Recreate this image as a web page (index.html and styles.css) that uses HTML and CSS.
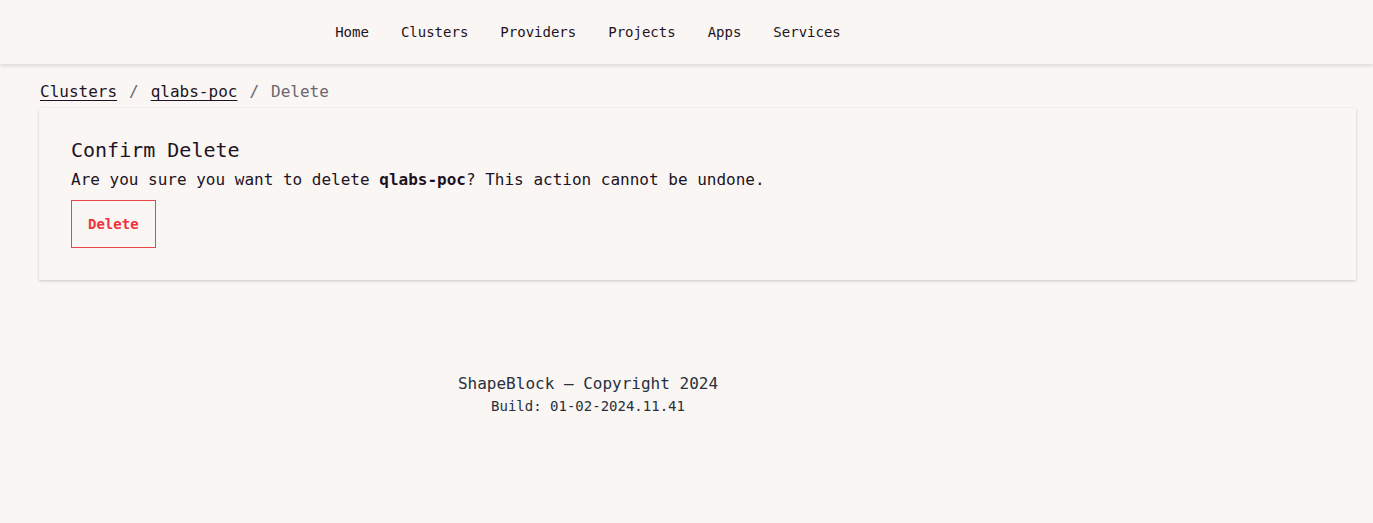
FILE: index.html
```html
<!DOCTYPE html>
<html lang="en">
<head>
<meta charset="utf-8">
<title>Confirm Delete</title>
<link rel="stylesheet" href="styles.css">
</head>
<body>
<header class="topbar">
  <nav class="nav">
    <a href="#" class="nav-link">Home</a>
    <a href="#" class="nav-link">Clusters</a>
    <a href="#" class="nav-link">Providers</a>
    <a href="#" class="nav-link">Projects</a>
    <a href="#" class="nav-link">Apps</a>
    <a href="#" class="nav-link">Services</a>
  </nav>
</header>
<main class="main">
  <div class="breadcrumb">
    <a href="#" class="crumb-link">Clusters</a>
    <span class="crumb-sep">/</span>
    <a href="#" class="crumb-link">qlabs-poc</a>
    <span class="crumb-sep">/</span>
    <span class="crumb-current">Delete</span>
  </div>
  <section class="card">
    <h2 class="card-title">Confirm Delete</h2>
    <p class="card-text">Are you sure you want to delete <strong>qlabs-poc</strong>? This action cannot be undone.</p>
    <button class="btn-delete" type="button">Delete</button>
  </section>
</main>
<footer class="footer">
  <p class="footer-copy">ShapeBlock — Copyright 2024</p>
  <p class="footer-build">Build: 01-02-2024.11.41</p>
</footer>
</body>
</html>
```
FILE: styles.css
```css
* { box-sizing: border-box; }
html, body { margin: 0; padding: 0; }
body {
  background: #f9f6f3;
  color: #1e1324;
  font-family: "DejaVu Sans Mono", "Liberation Mono", monospace;
  min-height: 523px;
}
.topbar {
  height: 64px;
  background: #f9f6f3;
  box-shadow: 0 2px 4px rgba(0,0,0,0.12);
  position: relative;
}
.nav {
  width: 1176px;
  height: 64px;
  display: flex;
  justify-content: center;
  align-items: center;
  gap: 32px;
}
.nav-link {
  font-size: 14px;
  color: #1e1324;
  text-decoration: none;
}
.main {
  padding: 16px 17px 0 39px;
}
.breadcrumb {
  font-size: 16px;
  line-height: 24px;
  display: flex;
  align-items: center;
  gap: 12px;
  padding-left: 1px;
}
.crumb-link {
  color: #1e1324;
  text-decoration: underline;
  text-underline-offset: 3px;
}
.crumb-sep, .crumb-current { color: #6b6670; }
.card {
  margin-top: 4px;
  background: #f9f6f3;
  box-shadow: 0 1px 3px rgba(0,0,0,0.14), 0 1px 2px rgba(0,0,0,0.06);
  padding: 28px 32px 32px 32px;
}
.card-title {
  margin: 0 0 4px 0;
  font-size: 20px;
  line-height: 28px;
  font-weight: normal;
}
.card-text {
  margin: 0;
  font-size: 16px;
  line-height: 24px;
}
.card-text strong { font-weight: bold; }
.btn-delete {
  margin-top: 8px;
  height: 48px;
  padding: 0 16px;
  background: transparent;
  border: 1px solid #e9464b;
  color: #f0323c;
  font-family: inherit;
  font-size: 14px;
  font-weight: bold;
  cursor: pointer;
}
.footer {
  width: 1176px;
  text-align: center;
  padding-top: 92px;
}
.footer-copy {
  margin: 0;
  font-size: 16px;
  line-height: 24px;
  color: #2a2f3d;
}
.footer-build {
  margin: 0;
  font-size: 14px;
  line-height: 20px;
  color: #2a2f3d;
}
```
